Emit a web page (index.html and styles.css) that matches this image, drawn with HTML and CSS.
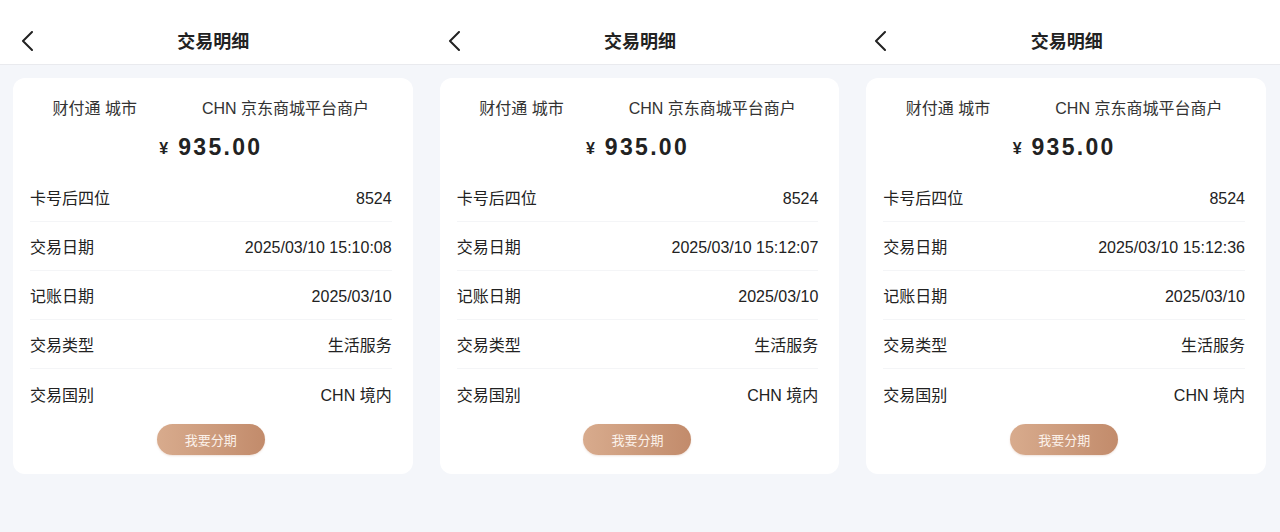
FILE: index.html
```html
<!DOCTYPE html>
<html lang="zh-CN">
<head>
<meta charset="utf-8">
<title>交易明细</title>
<link rel="stylesheet" href="styles.css">
</head>
<body>
<div class="screens">
  <section class="screen">
    <header class="nav">
      <svg class="back" viewBox="0 0 12 20" width="12" height="20"><path d="M11 1 L2 10 L11 19" fill="none" stroke="#222" stroke-width="2" stroke-linecap="round" stroke-linejoin="round"/></svg>
      <h1 class="title">交易明细</h1>
    </header>
    <div class="card">
      <div class="merchant"><span>财付通 城市</span><span>CHN 京东商城平台商户</span></div>
      <div class="amount"><span class="yen">¥</span><span class="num">935.00</span></div>
      <div class="row"><span>卡号后四位</span><span class="val digits">8524</span></div>
      <div class="row"><span>交易日期</span><span class="val digits">2025/03/10 15:10:08</span></div>
      <div class="row"><span>记账日期</span><span class="val digits">2025/03/10</span></div>
      <div class="row"><span>交易类型</span><span class="val">生活服务</span></div>
      <div class="row last"><span>交易国别</span><span class="val">CHN 境内</span></div>
      <div class="btn-wrap"><button class="btn">我要分期</button></div>
    </div>
  </section>
  <section class="screen">
    <header class="nav">
      <svg class="back" viewBox="0 0 12 20" width="12" height="20"><path d="M11 1 L2 10 L11 19" fill="none" stroke="#222" stroke-width="2" stroke-linecap="round" stroke-linejoin="round"/></svg>
      <h1 class="title">交易明细</h1>
    </header>
    <div class="card">
      <div class="merchant"><span>财付通 城市</span><span>CHN 京东商城平台商户</span></div>
      <div class="amount"><span class="yen">¥</span><span class="num">935.00</span></div>
      <div class="row"><span>卡号后四位</span><span class="val digits">8524</span></div>
      <div class="row"><span>交易日期</span><span class="val digits">2025/03/10 15:12:07</span></div>
      <div class="row"><span>记账日期</span><span class="val digits">2025/03/10</span></div>
      <div class="row"><span>交易类型</span><span class="val">生活服务</span></div>
      <div class="row last"><span>交易国别</span><span class="val">CHN 境内</span></div>
      <div class="btn-wrap"><button class="btn">我要分期</button></div>
    </div>
  </section>
  <section class="screen">
    <header class="nav">
      <svg class="back" viewBox="0 0 12 20" width="12" height="20"><path d="M11 1 L2 10 L11 19" fill="none" stroke="#222" stroke-width="2" stroke-linecap="round" stroke-linejoin="round"/></svg>
      <h1 class="title">交易明细</h1>
    </header>
    <div class="card">
      <div class="merchant"><span>财付通 城市</span><span>CHN 京东商城平台商户</span></div>
      <div class="amount"><span class="yen">¥</span><span class="num">935.00</span></div>
      <div class="row"><span>卡号后四位</span><span class="val digits">8524</span></div>
      <div class="row"><span>交易日期</span><span class="val digits">2025/03/10 15:12:36</span></div>
      <div class="row"><span>记账日期</span><span class="val digits">2025/03/10</span></div>
      <div class="row"><span>交易类型</span><span class="val">生活服务</span></div>
      <div class="row last"><span>交易国别</span><span class="val">CHN 境内</span></div>
      <div class="btn-wrap"><button class="btn">我要分期</button></div>
    </div>
  </section>
</div>
</body>
</html>
```
FILE: styles.css
```css
* { box-sizing: border-box; }
html, body {
  margin: 0;
  padding: 0;
  background: #f4f6fa;
  font-family: "Liberation Sans", "Noto Sans CJK SC", sans-serif;
  color: #222;
}
.screens {
  display: grid;
  grid-template-columns: repeat(3, 1fr);
  width: 1280px;
  height: 532px;
}
.screen {
  display: flex;
  flex-direction: column;
}
.nav {
  height: 65px;
  background: #fff;
  border-bottom: 1px solid #e9eaee;
  display: flex;
  align-items: center;
  justify-content: center;
  position: relative;
  padding-top: 2px;
}
.back {
  position: absolute;
  left: 21px;
  top: 31px;
}
.title {
  margin: 0;
  font-size: 18px;
  font-weight: bold;
  color: #222;
  font-family: "Noto Sans CJK SC", sans-serif;
  padding-top: 14px;
}
.card {
  margin: 13px 14px 0 13px;
  background: #fff;
  border-radius: 12px;
  padding: 19px 21px 19px 17px;
}
.merchant {
  display: flex;
  justify-content: center;
  gap: 65px;
  font-size: 16px;
  line-height: 22px;
  color: #333;
}
.merchant span { padding-top: 1px; }
.amount {
  margin-top: 12px;
  margin-bottom: 11px;
  height: 30px;
  display: flex;
  justify-content: center;
  align-items: center;
  gap: 10px;
  font-weight: bold;
  color: #222;
}
.yen {
  font-size: 16px;
  padding-top: 3px;
}
.num {
  font-size: 23px;
  letter-spacing: 2.3px;
  padding-top: 1px;
}
.row {
  height: 49px;
  display: flex;
  justify-content: space-between;
  align-items: center;
  font-size: 16px;
  color: #222;
  border-bottom: 1px solid #f4f5f7;
}
.row.last { border-bottom: none; }
.val { color: #222; }
.val.digits { padding-top: 3px; }
.btn-wrap {
  display: flex;
  justify-content: center;
  margin-top: 6px;
}
.btn {
  width: 108px;
  height: 31px;
  border: none;
  border-radius: 16px;
  background: linear-gradient(90deg, #d8ab8d 0%, #cc9a7b 55%, #c28b6b 100%);
  color: #fbf1ea;
  font-size: 13px;
  font-family: "Noto Sans CJK SC", sans-serif;
  box-shadow: 0 1px 2px rgba(190, 140, 110, 0.25);
  padding: 0;
}
```
